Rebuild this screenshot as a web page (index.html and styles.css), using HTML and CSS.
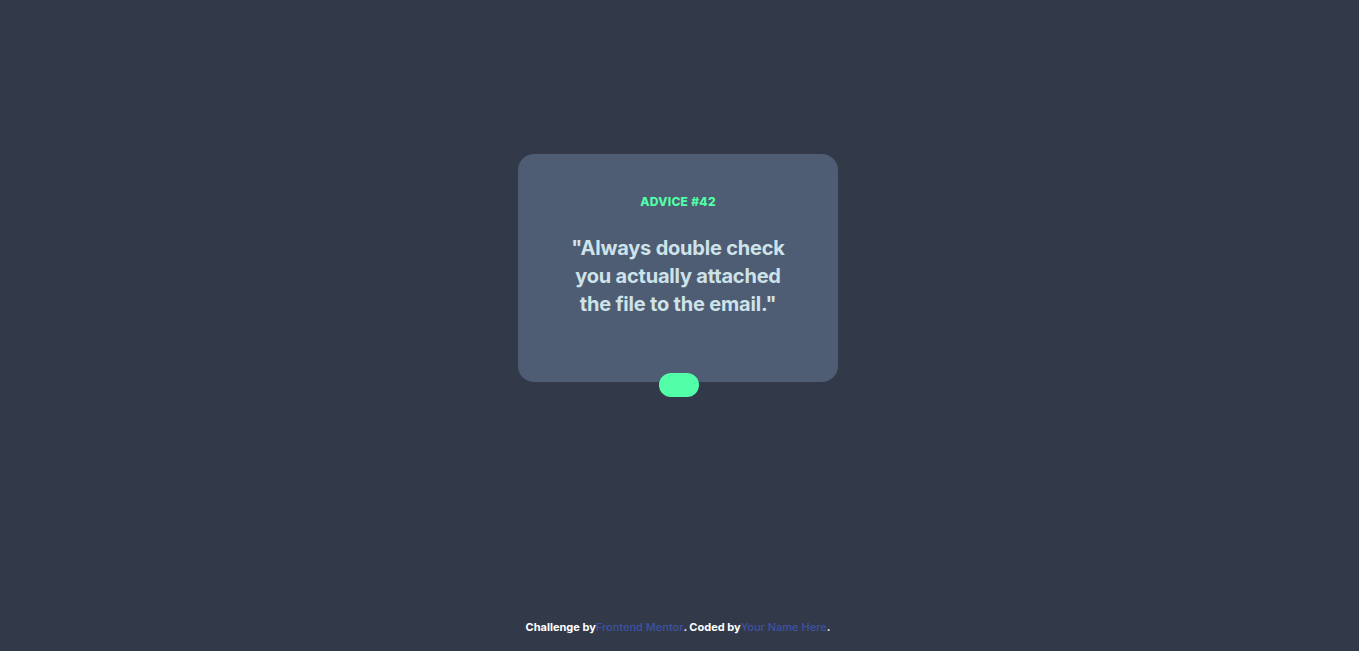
FILE: index.html
```html
<!DOCTYPE html>
<html lang="en">
<head>
<meta charset="utf-8">
<title>Advice generator app</title>
<link rel="stylesheet" href="styles.css">
</head>
<body>
<div class="page">
  <main class="main">
    <section class="card">
      <h1 class="card__title">ADVICE #42</h1>
      <p class="card__quote">"Always double check you actually attached the file to the email."</p>
      <button class="card__dice" aria-label="New advice"></button>
    </section>
  </main>
  <footer class="attribution">
    Challenge by<a href="#">Frontend Mentor</a>. Coded by<a href="#">Your Name Here</a>.
  </footer>
</div>
</body>
</html>
```

FILE: styles.css
```css
* { box-sizing: border-box; }
html, body { margin: 0; padding: 0; }
body {
  background: #323a49;
  font-family: "Inter", "Noto Sans", sans-serif;
  color: #cee3e9;
}
.page {
  min-height: 100vh;
  display: flex;
  flex-direction: column;
  align-items: center;
  padding-right: 3px;
}
.main {
  flex: 1;
  padding-top: 154px;
}
.card {
  position: relative;
  width: 320px;
  background: #4e5d73;
  border-radius: 16px;
  padding: 41px 48px 64px;
  text-align: center;
}
.card__title {
  margin: 0;
  font-size: 12px;
  line-height: 14px;
  font-weight: 800;
  color: #52ffa8;
  letter-spacing: 0.3px;
}
.card__quote {
  margin: 25px 0 0;
  font-size: 20px;
  line-height: 28px;
  font-weight: 700;
  letter-spacing: -0.2px;
}
.card__dice {
  position: absolute;
  left: 141px;
  bottom: -15px;
  width: 40px;
  height: 24px;
  border: 0;
  border-radius: 12px;
  background: #52ffa8;
  padding: 0;
  cursor: pointer;
}
.attribution {
  padding-bottom: 17px;
  font-size: 11px;
  line-height: 14px;
  font-weight: 700;
  color: #ffffff;
  text-align: center;
}
.attribution a {
  color: #3e52a3;
  text-decoration: none;
  font-weight: 500;
}
```
